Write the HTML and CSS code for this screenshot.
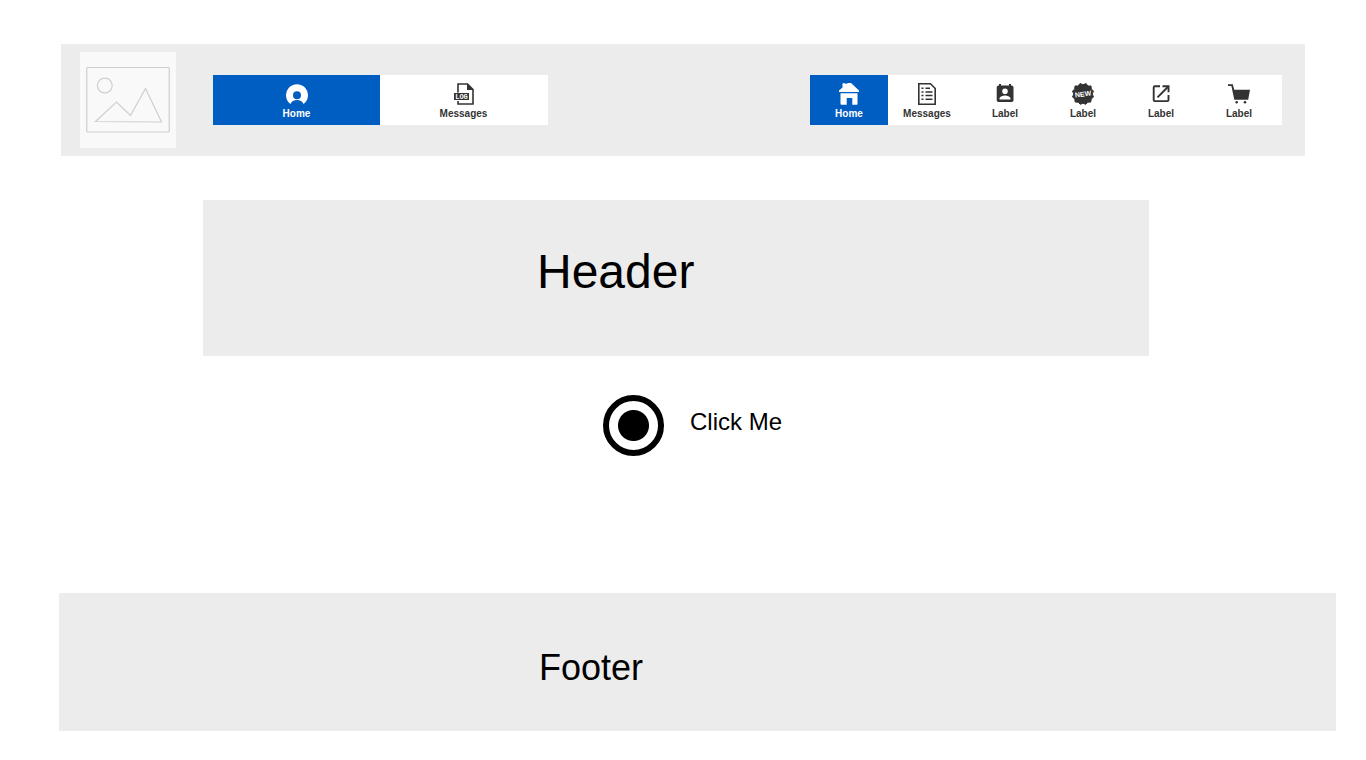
FILE: index.html
```html
<!DOCTYPE html>
<html lang="en">
<head>
<meta charset="utf-8">
<meta name="viewport" content="width=device-width, initial-scale=1">
<title>Home</title>
<link rel="stylesheet" href="styles.css">
</head>
<body>
<header class="topbar">
  <svg class="logo" viewBox="0 0 96 96" role="img" aria-label="Image placeholder">
    <g fill="none" stroke="#cfcfcf" stroke-width="1.2">
      <rect x="6.8" y="15.5" width="82.4" height="64.5" rx="1"/>
      <circle cx="24.8" cy="33.5" r="7.4"/>
      <path d="M15.5 69.5 36.5 50 50.5 63.5 65.5 36.5 81.5 70z"/>
    </g>
  </svg>
  <nav class="tabs tabs-main" aria-label="Main">
    <a class="tab active" href="#">
      <svg class="icon" viewBox="0 0 24 24"><path fill="currentColor" fill-rule="evenodd" d="M5.500 22A11 11 0 1 1 18.500 22C17.500 19.400 15 18 12 18S6.500 19.400 5.500 22zM12 9.200a4 4 0 1 0 0 8a4 4 0 1 0 0-8z"/></svg>
      <span>Home</span>
    </a>
    <a class="tab" href="#">
      <svg class="icon" viewBox="0 0 24 24"><path fill="none" stroke="currentColor" stroke-width="1.6" d="M6 10.500V2h9.500L21 7.500V22H6v-3"/><path fill="currentColor" d="M15 1.500 21.500 8H15zM2 11h15v7H2z"/><text class="log" x="9.500" y="16.500">LOG</text></svg>
      <span>Messages</span>
    </a>
  </nav>
  <nav class="tabs tabs-side" aria-label="Shortcuts">
    <a class="tab active" href="#">
      <svg class="icon" viewBox="0 0 24 24"><path fill="currentColor" d="M2 10V8.500L5.500 5.500V1.500L7.500 1 9 2l2-1h3L22 8.500V10zM3.500 11.300h17V22q0 .7-.7.7h-4.500V16H9.700v6.700H4.500q-1 0-1-1z"/></svg>
      <span>Home</span>
    </a>
    <a class="tab" href="#">
      <svg class="icon" viewBox="0 0 24 24"><path fill="none" stroke="currentColor" stroke-width="1.6" d="M3.800 1.800H15.500L20.200 6.500V22.200H3.800z"/><path fill="none" stroke="currentColor" stroke-width="1.500" d="M6.500 6.200H8.500M6.500 9.900H8.500M6.500 13.600H8.500M6.500 17.300H8.500M10.500 6.200H15M10.500 9.900H17.500M10.500 13.600H17.500M10.500 17.300H17.500"/></svg>
      <span>Messages</span>
    </a>
    <a class="tab" href="#">
      <svg class="icon" viewBox="0 0 24 24"><path fill="currentColor" fill-rule="evenodd" d="M18.500 3.500H18V2h-2v1.500H8V2H6v1.500H5.500Q3.700 3.500 3.700 5.300V18.200Q3.700 20 5.500 20H18.700Q20.500 20 20.500 18.200V5.300Q20.500 3.500 18.500 3.500zM12 6.500a2.800 2.800 0 1 1 0 5.600a2.800 2.800 0 1 1 0-5.600zM6.500 17.500v-1c0-2 3.700-3 5.500-3s5.500 1 5.500 3v1z"/></svg>
      <span>Label</span>
    </a>
    <a class="tab" href="#">
      <svg class="icon" viewBox="0 0 24 24"><path fill="currentColor" stroke="currentColor" stroke-linejoin="round" d="M12 2.800 15 1.500 16.800 4 20 4 20.300 7.200 22.500 9 21.200 12 22.500 15 20.200 16.900 19.800 20 16.700 20.200 14.800 22.300 12 21.200 9.200 22.300 7.300 20.200 4.200 20 3.800 16.900 1.500 15 2.800 12 1.500 9 3.700 7.200 4 4 7.200 4 9 1.500z"/><text class="new" x="12" y="14.500" transform="rotate(-8 12 12)">NEW</text></svg>
      <span>Label</span>
    </a>
    <a class="tab" href="#">
      <svg class="icon" viewBox="0 0 24 24"><path fill="none" stroke="currentColor" stroke-width="1.900" d="M11 4.300H5.800Q4.700 4.300 4.700 5.400V18Q4.700 19.100 5.800 19.100H18.400Q19.500 19.100 19.500 18V13M8.500 15.300 18.800 5"/><path fill="currentColor" d="M13.500 3.300H20.500V10.300H18.600V5.200H13.500z"/></svg>
      <span>Label</span>
    </a>
    <a class="tab" href="#">
      <svg class="icon" viewBox="0 0 24 24"><path fill="currentColor" d="M1 2.200H5.800L7.200 7.800H23L21.200 17.800H7.300L4.400 4H1z"/><circle cx="9.700" cy="20.200" r="1.300" fill="currentColor"/><circle cx="18" cy="20.200" r="1.300" fill="currentColor"/></svg>
      <span>Label</span>
    </a>
  </nav>
</header>
<main>
  <section class="hero"><h1>Header</h1></section>
  <div class="choice">
    <input class="radio" type="radio" id="click-me" name="choice" checked>
    <label for="click-me">Click Me</label>
  </div>
</main>
<footer class="footer"><p>Footer</p></footer>
</body>
</html>
```

FILE: styles.css
```css
* {
  box-sizing: border-box;
}

body {
  margin: 0;
  padding-top: 44px;
  background: #fff;
  color: #000;
  font-family: "Liberation Sans", Arial, sans-serif;
}

.topbar {
  display: flex;
  align-items: center;
  margin: 0 61px;
  padding: 8px 23px 8px 19px;
  background: #ececec;
}

.logo {
  width: 96px;
  height: 96px;
  flex: none;
  background: #f9f9f9;
}

.tabs {
  display: flex;
  background: #fff;
}

.tabs-main {
  flex: 0 1 335px;
  margin-left: 37px;
  padding-right: 1px;
}

.tabs-main .tab {
  flex: 1;
}

.tabs-side {
  margin-left: auto;
  padding-right: 4px;
}

.tabs-side .tab {
  width: 78px;
}

.tab {
  display: flex;
  flex-direction: column;
  align-items: center;
  gap: 2px;
  padding: 7px 0 5px;
  color: #333;
  font-size: 10px;
  font-weight: bold;
  line-height: 12px;
  text-decoration: none;
}

.tab.active {
  background: #005dc1;
  color: #fff;
}

.icon {
  width: 24px;
  height: 24px;
}

.icon text {
  fill: #fff;
  font-weight: bold;
  text-anchor: middle;
}

.log {
  font-family: "Liberation Mono", monospace;
  font-size: 7px;
}

.new {
  font-size: 7px;
}

.hero {
  margin: 44px 217px 0 203px;
  padding: 44px 0 57px 334px;
  background: #ececec;
}

.hero h1 {
  margin: 0;
  font-size: 48px;
  font-weight: normal;
  line-height: 55px;
}

.choice {
  display: flex;
  align-items: flex-start;
  gap: 26px;
  margin: 39px 0 0 603px;
}

.choice label {
  padding-top: 13px;
  font-size: 24px;
  line-height: 28px;
}

.radio {
  appearance: none;
  width: 61px;
  height: 61px;
  margin: 0;
  border: 6px solid #000;
  border-radius: 50%;
  background: radial-gradient(circle, #000 15px, #fff 16px);
}

.footer {
  margin: 137px 30px 0 59px;
  padding: 54px 0 42px 480px;
  background: #ececec;
}

.footer p {
  margin: 0;
  font-size: 36px;
  line-height: 42px;
}
```
